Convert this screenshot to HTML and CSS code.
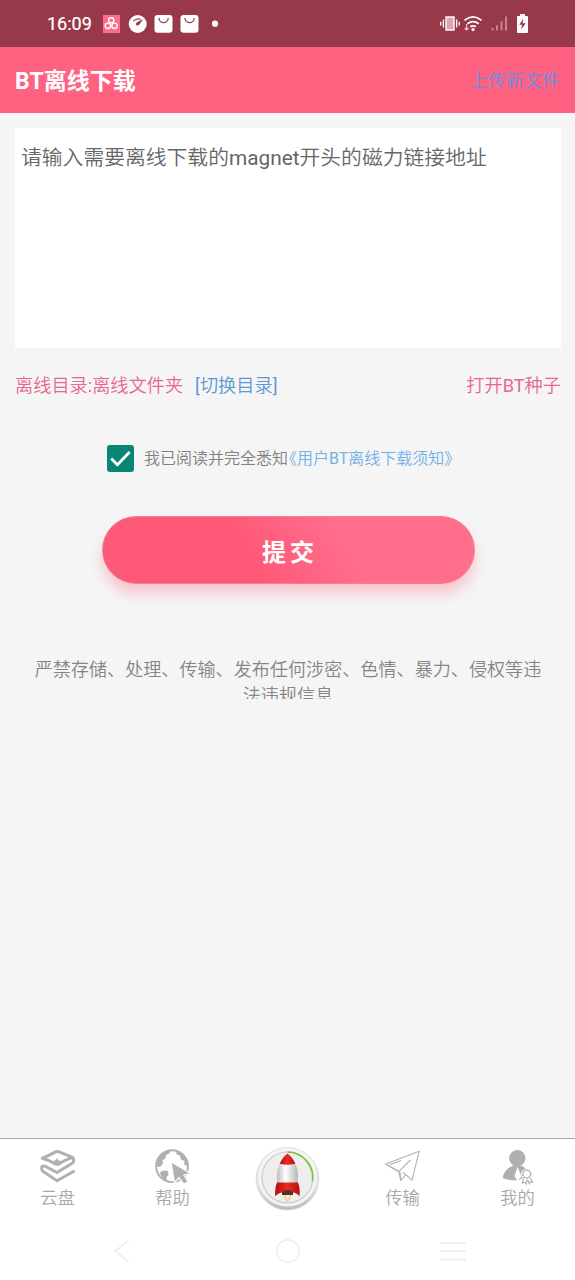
FILE: index.html
```
<!DOCTYPE html>
<html lang="zh-CN">
<head>
<meta charset="utf-8">
<title>BT离线下载</title>
<link rel="stylesheet" href="styles.css">
</head>
<body>
<div class="screen">
  <div class="status">
    <span class="time">16:09</span>
    <svg class="status-left" width="120" height="20" viewBox="0 0 120 20">
      <rect x="1" y="1" width="17" height="18" fill="#ff6c89"/>
      <g fill="none" stroke="#fff" stroke-width="1.4"><circle cx="9.2" cy="6.3" r="2.6"/><circle cx="5.9" cy="11.8" r="2.7"/><circle cx="12.5" cy="11.8" r="2.7"/></g>
      <circle cx="35.7" cy="10" r="9" fill="#fff"/>
      <path d="M31.2 7.2Q34.2 4.1 38.5 5.1" fill="none" stroke="#98394a" stroke-width="1.1"/>
      <path d="M41.4 4.8 37.2 10.8Q35.8 12.2 34.3 11.2 33.3 9.8 34.7 8.6Z" fill="#98394a"/>
      <rect x="52.5" y="1" width="18" height="17.8" rx="3" fill="#fff"/>
      <rect x="78.5" y="1" width="18" height="17.8" rx="3" fill="#fff"/>
      <path d="M57 4a4.6 4.6 0 0 0 9.2 0M83 4a4.6 4.6 0 0 0 9.2 0" fill="none" stroke="#98394a" stroke-width="1.3"/>
      <circle cx="113" cy="9.7" r="3.1" fill="#fff"/>
    </svg>
    <svg class="status-right" width="90" height="20" viewBox="0 0 90 20">
      <rect x="6" y="3" width="8" height="13" fill="#dca6b0" stroke="#fff" stroke-width="1.4"/>
      <path d="M3.4 5.5v8M16.6 5.5v8M.8 7.7v3.8M19.2 7.7v3.8" stroke="#fff" stroke-width="1.3"/>
      <g fill="none" stroke="#fff" stroke-width="1.8"><path d="M24.5 6.4Q33 -.6 41.5 6.4M27.5 9.8Q33 5.6 38.7 9.8M30.3 12.8Q33 10.8 35.9 12.8"/></g>
      <circle cx="33" cy="15.6" r="1.6" fill="#fff"/>
      <path d="M26.6 10v6m-2-2 2 2 2-2" stroke="#eec5cd" stroke-width="1.2" fill="none"/>
      <path d="M52.5 14v2.5M57 11.2v5.3M61.5 7.2v9.3M66 2.5v14" stroke="#c78791" stroke-width="1.9"/>
      <path d="M80 0h5v2h2q1 0 1 1v15q0 1-1 1h-9q-1 0-1-1V3q0-1 1-1h2z" fill="#fff"/>
      <path d="m83.3 4.8-4 6h2.8l-1 5 4.6-6.5h-3z" fill="#98394a"/>
    </svg>
  </div>
  <header class="header">
    <h1 class="title">BT离线下载</h1>
    <a class="upload">上传新文件</a>
  </header>
  <main class="main">
    <div class="input">请输入需要离线下载的magnet开头的磁力链接地址</div>
    <div class="directory">
      <span>离线目录:离线文件夹</span><a class="switch">[切换目录]</a><a class="seed">打开BT种子</a>
    </div>
    <div class="agreement">
      <svg width="27" height="27" viewBox="0 0 27 27"><rect width="27" height="27" rx="3" fill="#078674"/><path d="m4.2 13.6 6.2 6.2L22.7 7" fill="none" stroke="#fff" stroke-width="2.8"/></svg>
      <span class="agree-text">我已阅读并完全悉知</span><a class="terms">《用户BT离线下载须知》</a>
    </div>
    <button class="submit">提交</button>
    <p class="warning">严禁存储、处理、传输、发布任何涉密、色情、暴力、侵权等违法违规信息</p>
  </main>
  <nav class="tabs">
    <div class="tab">
      <svg class="tab-icon" width="36" height="36" viewBox="0 0 36 36" fill="none" stroke="#b0b0b0" stroke-width="3" stroke-linejoin="round" stroke-linecap="round">
        <path d="M2.3 9.2Q8 7.3 14.5 3.4q3-1.6 6 0L32.5 8.4Q25 11 19.5 14.6q-2.5 1.4-5 0Q9 11 2.3 9.2z"/>
        <path d="M33 8.8q1.6 3.7-.8 5.4L17 23.5 5 17.2q-3.6-1-3.4 2.2.1 2 1.6 3L17 31.8l16.5-9.3"/>
        <path d="m12.5 13.5 2-2.3 1 .4L17 9l1.5 2.6 1-.4 2 2.3-4.5 1.8z" fill="#b0b0b0" stroke="none"/>
      </svg>
      <span>云盘</span>
    </div>
    <div class="tab">
      <svg class="tab-icon" width="36" height="36" viewBox="0 0 36 36">
        <circle cx="17" cy="17.2" r="15.9" fill="none" stroke="#b0b0b0" stroke-width="1.9"/>
        <path d="M1.5 15 5 7l6-5 4-.8-.5 3.3-3.5 1.5-.5 3.5-3 1.5.5 3.5-3 3.5-3-.5zM22 2l6 3.3 4 6.2 1.2 6.5-4.2-3 .5-3-3.5-1.5-1-4-4-1.5zM4.5 24l3.5-2.5 5 .5.5 4-2 2 .5 3.5-4.5-2.5z" fill="#b0b0b0"/>
        <path d="m16 12.8 19.5 11.7-6.8 1.7 4.3 6.3-4.2 2.7-4.8-6.5-4.5 5z" fill="#b0b0b0" stroke="#fff" stroke-width="1.1"/>
      </svg>
      <span>帮助</span>
    </div>
    <div class="tab center">
      <svg width="68" height="68" viewBox="0 0 68 68">
        <defs>
          <linearGradient id="rim" x2="0" y2="1"><stop stop-color="#f0f0f0"/><stop offset=".65" stop-color="#e1e1e1"/><stop offset="1" stop-color="#b8b8b8"/></linearGradient>
          <linearGradient id="body"><stop stop-color="#bbb"/><stop offset=".4" stop-color="#fff"/><stop offset="1" stop-color="#b5b5b5"/></linearGradient>
          <linearGradient id="red"><stop stop-color="#b60d0d"/><stop offset=".5" stop-color="#e92c27"/><stop offset="1" stop-color="#b60d0d"/></linearGradient>
        </defs>
        <circle cx="33.5" cy="33.8" r="31.3" fill="url(#rim)" stroke="#ddd"/>
        <circle cx="33.5" cy="32.2" r="29.3" fill="#f4f4f4"/>
        <circle cx="33.5" cy="32.5" r="25.5" fill="#eee" stroke="#cdcdcd" stroke-width="1.2"/>
        <path d="M33.5 7a25.5 25.5 0 0 1 25 29" fill="none" stroke="#7bc337" stroke-width="1.7"/>
        <path d="M29.5 49h8l-1 5-3 4-3-4z" fill="#f9cf9d"/><path d="M31.7 50h3.4l-1.7 5.5z" fill="#fff5c9"/>
        <path d="M28 44h11v6H28z" fill="#56302b"/>
        <path d="M24 36Q20.5 41 21.3 51.5q2.7-3.7 7.5-4 .8-2.4 4.7-2.5 4.2.1 5 2.5 4.7.3 7 4Q46.5 41 43 36z" fill="url(#red)"/>
        <path d="M26 18h15q4.5 9 2.5 19.5h-20Q21.5 27 26 18z" fill="url(#body)"/>
        <path d="M25.8 18.7Q28 12.7 33.5 8.5q5 3.7 7.8 10.2-8 2-15.5 0z" fill="url(#red)"/>
      </svg>
    </div>
    <div class="tab">
      <svg class="tab-icon" width="36" height="36" viewBox="0 0 36 36" fill="none" stroke="#b0b0b0" stroke-width="1.1" stroke-linejoin="round">
        <path d="M.6 15 34.2 2.3 27 31.2l-6.2-5.5-5 5.7-2.1-8.8z"/>
        <path d="m3 16.2 10.7 6.4L25.5 11M15.8 31.4l-.8-8.6M5 15.5l11-4M20.8 25.7l-3-2.3"/>
      </svg>
      <span>传输</span>
    </div>
    <div class="tab">
      <svg class="tab-icon" width="36" height="36" viewBox="0 0 36 36">
        <circle cx="17.3" cy="9.2" r="8.2" fill="#b0b0b0"/>
        <path d="M14 16q-10.5 4.5-11.2 13Q9 32 19 31l8-4v-6q-1.5-2-5-4z" fill="#b0b0b0"/>
        <path d="m17.5 18-3 9 3 5 4-4.5z" fill="#fff"/>
        <path d="m24 28-1.7 6.2 2.5-1 1.4 1.8 1-5 2.2 4.8 1-2 2.2.4-3-5.5" fill="#fff" stroke="#b0b0b0" stroke-width="1.1"/>
        <circle cx="26.7" cy="25" r="5.6" fill="#fff"/>
        <circle cx="26.7" cy="25" r="4" fill="#fff" stroke="#b0b0b0" stroke-width="1.5" stroke-dasharray="2.1 .4"/>
      </svg>
      <span>我的</span>
    </div>
  </nav>
  <div class="system-nav">
    <svg width="28" height="28" viewBox="0 0 28 28"><path d="M20.5 3.5 7 14l13.5 10.5" fill="none" stroke="#efefef" stroke-width="1.6"/></svg>
    <svg width="28" height="28" viewBox="0 0 28 28"><circle cx="14" cy="14" r="11.3" fill="none" stroke="#efefef" stroke-width="1.6"/></svg>
    <svg width="28" height="28" viewBox="0 0 28 28"><path d="M1 6.2h26M1 14.2h26M1 22.5h26" stroke="#eee" stroke-width="1.8"/></svg>
  </div>
</div>
</body>
</html>
```
FILE: styles.css
```
* { box-sizing: border-box; }
body {
  margin: 0;
  background: #fff;
  font-family: Roboto, "Noto Sans CJK SC DemiLight", "Noto Sans CJK SC", sans-serif;
  font-weight: 400;
}
.screen {
  width: 575px;
  height: 1280px;
  display: flex;
  flex-direction: column;
  overflow: hidden;
}
.status {
  flex: none;
  height: 47px;
  padding: 0 45px 0 47px;
  display: flex;
  align-items: center;
  background: #98394a;
  color: #fff;
}
.time {
  width: 55px;
  font-size: 18px;
  -webkit-text-stroke: .2px #fff;
}
.status-right { margin-left: auto; }
.header {
  flex: none;
  height: 66px;
  padding: 0 15px;
  display: flex;
  align-items: center;
  justify-content: space-between;
  background: #ff6280;
}
.title {
  margin: 4px 0 0;
  color: #fff;
  font-family: Roboto, "Noto Sans CJK SC", sans-serif;
  font-size: 23px;
  line-height: 34px;
  font-weight: 700;
}
.upload {
  margin-bottom: 2px;
  color: #6b8de0;
  font-size: 18px;
}
.main {
  flex: 1;
  padding: 15px 14px 0 15px;
  display: flex;
  flex-direction: column;
  background: #f5f5f5;
}
.input {
  height: 220px;
  padding: 15px 6px;
  background: #fff;
  color: #666;
  font-size: 20.8px;
  line-height: 31px;
  white-space: nowrap;
}
.directory {
  margin-top: 24px;
  height: 27px;
  display: flex;
  align-items: center;
  color: #e8678a;
  font-size: 18.2px;
  line-height: 27px;
}
.switch {
  margin-left: 12px;
  color: #5e97d6;
}
.seed { margin-left: auto; }
.agreement {
  margin-top: 46px;
  padding-left: 92px;
  height: 27px;
  display: flex;
  align-items: center;
  font-size: 16px;
  line-height: 23px;
  white-space: nowrap;
}
.agree-text {
  margin: 0 0 0 10px;
  color: #808080;
}
.terms {
  margin-left: 1px;
  color: #73b0e4;
  font-feature-settings: "halt";
}
.submit {
  align-self: center;
  width: 373px;
  height: 68px;
  margin-top: 44px;
  padding: 0 0 0 4px;
  border: 1px solid #f47c95;
  border-radius: 34px;
  background: linear-gradient(60deg, #ff5979 40%, #ff6e8b 65%);
  box-shadow: 0 10px 13px rgba(255, 98, 128, .32);
  color: #fff;
  font-family: Roboto, "Noto Sans CJK SC", sans-serif;
  font-size: 24px;
  font-weight: 700;
  letter-spacing: 4px;
}
.warning {
  margin: 73px 15px 0;
  height: 42px;
  overflow: hidden;
  color: #858585;
  font-size: 18.1px;
  line-height: 26px;
  text-align: center;
}
.tabs {
  flex: none;
  height: 84px;
  display: grid;
  grid-template-columns: repeat(5, 1fr);
  border-top: 1px solid #aaa;
  color: #a8a8a8;
  font-size: 17.3px;
  line-height: 26px;
}
.tab {
  padding-top: 10px;
  display: flex;
  flex-direction: column;
  align-items: center;
}
.center { padding-top: 6px; }
.system-nav {
  flex: none;
  height: 58px;
  padding: 0 108px;
  display: flex;
  align-items: center;
  justify-content: space-between;
}
```
